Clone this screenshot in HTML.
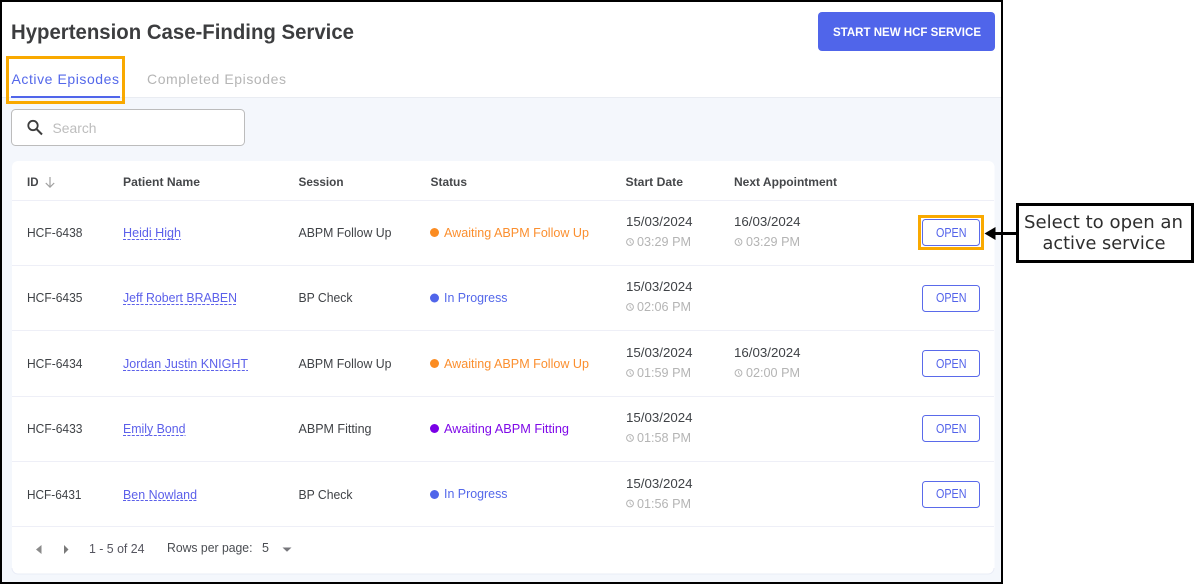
<!DOCTYPE html>
<html lang="en">
<head>
<meta charset="utf-8">
<title>Hypertension Case-Finding Service</title>
<style>
html,body{margin:0;padding:0;width:1196px;height:584px;overflow:hidden;background:#fff}
svg{display:block}
text{font-family:"Liberation Sans",Arial,sans-serif;font-size:12.5px;fill:#3f4246}
.h{font-weight:bold;font-size:12px;fill:#45474a}
.link{fill:#5c60ea}
.or{fill:#fb8f2f}
.bl{fill:#5468ea}
.pu{fill:#7f0ae8}
.t{fill:#b4b4b4}
.o{fill:#5262ea;font-size:12.5px}
.c{font-family:"DejaVu Sans",sans-serif;font-size:18px;fill:#2e2e2e}
</style>
</head>
<body>
<svg width="1196" height="584" viewBox="0 0 1196 584" xmlns="http://www.w3.org/2000/svg">
<rect width="1196" height="584" fill="#fff"/>
<rect x="2" y="98" width="999" height="484" fill="#f4f7fc"/>
<rect x="2" y="97" width="999" height="1" fill="#e9ecf2"/>

<text x="11" y="39" style="font-size:21px;font-weight:bold;fill:#3c3d3f" textLength="343" lengthAdjust="spacingAndGlyphs">Hypertension Case-Finding Service</text>

<rect x="818" y="12" width="177" height="39" rx="4" fill="#5065ea"/>
<text x="833" y="36" style="font-size:12px;font-weight:bold;fill:#fff" textLength="148" lengthAdjust="spacingAndGlyphs">START NEW HCF SERVICE</text>

<text x="11.5" y="84" style="font-size:14px;fill:#5468ea" textLength="107.5" lengthAdjust="spacing">Active Episodes</text>
<text x="147" y="84" style="font-size:14px;fill:#b5b5b5" textLength="139" lengthAdjust="spacing">Completed Episodes</text>
<rect x="11" y="96" width="109" height="2" fill="#5065ea"/>
<rect x="7.500" y="57.500" width="116" height="45" fill="none" stroke="#f9a900" stroke-width="3"/>

<rect x="11.500" y="109.500" width="233" height="36" rx="4" fill="#fff" stroke="#bcbcbc"/>
<circle cx="33" cy="125.500" r="4.700" fill="none" stroke="#3d3d3d" stroke-width="1.800"/>
<path d="M36.500 129l5.500 5.500" stroke="#3d3d3d" stroke-width="2" fill="none"/>
<text x="52.500" y="133" style="font-size:14px;fill:#bdbdbd" textLength="44" lengthAdjust="spacingAndGlyphs">Search</text>

<rect x="12" y="161" width="982.500" height="413" rx="6" fill="#fff"/>
<path d="M12 568a6 6 0 0 0 6 6h970a6 6 0 0 0 6-6" fill="none" stroke="#e9ecf6"/>
<g fill="#eeeff7">
<rect x="12" y="200" width="982" height="1"/>
<rect x="12" y="265" width="982" height="1"/>
<rect x="12" y="330" width="982" height="1"/>
<rect x="12" y="396" width="982" height="1"/>
<rect x="12" y="461" width="982" height="1"/>
<rect x="12" y="526" width="982" height="1"/>
</g>

<text class="h" x="27" y="186" textLength="11.500" lengthAdjust="spacingAndGlyphs">ID</text>
<path d="M50 177v10M45.800 183l4.200 4.200 4.200-4.200" fill="none" stroke="#a0a0a0" stroke-width="1.200"/>
<text class="h" x="123" y="186" textLength="77" lengthAdjust="spacingAndGlyphs">Patient Name</text>
<text class="h" x="298.500" y="186" textLength="45" lengthAdjust="spacingAndGlyphs">Session</text>
<text class="h" x="430.500" y="186" textLength="36.500" lengthAdjust="spacingAndGlyphs">Status</text>
<text class="h" x="625.500" y="186" textLength="57.500" lengthAdjust="spacingAndGlyphs">Start Date</text>
<text class="h" x="734" y="186" textLength="103" lengthAdjust="spacingAndGlyphs">Next Appointment</text>

<!-- Row 1 -->
<text x="27" y="237" textLength="55.500" lengthAdjust="spacingAndGlyphs">HCF-6438</text>
<text class="link" x="123" y="237" textLength="58" lengthAdjust="spacingAndGlyphs">Heidi High</text>
<path d="M123 239.500h58" stroke="#5c60ea" stroke-dasharray="3 1.400" fill="none"/>
<text x="298.500" y="237" textLength="93" lengthAdjust="spacingAndGlyphs">ABPM Follow Up</text>
<circle cx="434.500" cy="232.500" r="4.500" fill="#fb8c22"/>
<text class="or" x="444" y="237" textLength="145" lengthAdjust="spacingAndGlyphs">Awaiting ABPM Follow Up</text>
<text x="626" y="226" textLength="66.500" lengthAdjust="spacingAndGlyphs">15/03/2024</text>
<circle cx="630" cy="242" r="3.400" fill="none" stroke="#b4b4b4"/><path d="M630 240v2l1.500 1.500" fill="none" stroke="#b4b4b4" stroke-width=".8"/>
<text class="t" x="637" y="246" textLength="54" lengthAdjust="spacingAndGlyphs">03:29 PM</text>
<text x="734" y="226" textLength="66.500" lengthAdjust="spacingAndGlyphs">16/03/2024</text>
<circle cx="738.500" cy="242" r="3.400" fill="none" stroke="#b4b4b4"/><path d="M738.500 240v2l1.500 1.500" fill="none" stroke="#b4b4b4" stroke-width=".8"/>
<text class="t" x="746" y="246" textLength="54" lengthAdjust="spacingAndGlyphs">03:29 PM</text>
<rect x="922.500" y="219.500" width="57" height="26" rx="3" fill="#fff" stroke="#5a6aea"/>
<text class="o" x="936" y="237" textLength="30.500" lengthAdjust="spacingAndGlyphs">OPEN</text>
<rect x="919.500" y="216.500" width="63" height="32" fill="none" stroke="#f9a900" stroke-width="3"/>

<!-- Row 2 -->
<text x="27" y="302" textLength="55.500" lengthAdjust="spacingAndGlyphs">HCF-6435</text>
<text class="link" x="123" y="302" textLength="114" lengthAdjust="spacingAndGlyphs">Jeff Robert BRABEN</text>
<path d="M123 304.500h114" stroke="#5c60ea" stroke-dasharray="3 1.400" fill="none"/>
<text x="298.500" y="302" textLength="54" lengthAdjust="spacingAndGlyphs">BP Check</text>
<circle cx="434.500" cy="298" r="4.500" fill="#5065ea"/>
<text class="bl" x="444" y="302" textLength="63.500" lengthAdjust="spacingAndGlyphs">In Progress</text>
<text x="626" y="291" textLength="66.500" lengthAdjust="spacingAndGlyphs">15/03/2024</text>
<circle cx="630" cy="307" r="3.400" fill="none" stroke="#b4b4b4"/><path d="M630 305v2l1.500 1.500" fill="none" stroke="#b4b4b4" stroke-width=".8"/>
<text class="t" x="637" y="311" textLength="54" lengthAdjust="spacingAndGlyphs">02:06 PM</text>
<rect x="922.500" y="285.500" width="57" height="26" rx="3" fill="#fff" stroke="#5a6aea"/>
<text class="o" x="936" y="302" textLength="30.500" lengthAdjust="spacingAndGlyphs">OPEN</text>

<!-- Row 3 -->
<text x="27" y="368" textLength="55.500" lengthAdjust="spacingAndGlyphs">HCF-6434</text>
<text class="link" x="123" y="368" textLength="125" lengthAdjust="spacingAndGlyphs">Jordan Justin KNIGHT</text>
<path d="M123 370.500h125" stroke="#5c60ea" stroke-dasharray="3 1.400" fill="none"/>
<text x="298.500" y="368" textLength="93" lengthAdjust="spacingAndGlyphs">ABPM Follow Up</text>
<circle cx="434.500" cy="363.500" r="4.500" fill="#fb8c22"/>
<text class="or" x="444" y="368" textLength="145" lengthAdjust="spacingAndGlyphs">Awaiting ABPM Follow Up</text>
<text x="626" y="357" textLength="66.500" lengthAdjust="spacingAndGlyphs">15/03/2024</text>
<circle cx="630" cy="373" r="3.400" fill="none" stroke="#b4b4b4"/><path d="M630 371v2l1.500 1.500" fill="none" stroke="#b4b4b4" stroke-width=".8"/>
<text class="t" x="637" y="377" textLength="54" lengthAdjust="spacingAndGlyphs">01:59 PM</text>
<text x="734" y="357" textLength="66.500" lengthAdjust="spacingAndGlyphs">16/03/2024</text>
<circle cx="738.500" cy="373" r="3.400" fill="none" stroke="#b4b4b4"/><path d="M738.500 371v2l1.500 1.500" fill="none" stroke="#b4b4b4" stroke-width=".8"/>
<text class="t" x="746" y="377" textLength="54" lengthAdjust="spacingAndGlyphs">02:00 PM</text>
<rect x="922.500" y="350.500" width="57" height="26" rx="3" fill="#fff" stroke="#5a6aea"/>
<text class="o" x="936" y="368" textLength="30.500" lengthAdjust="spacingAndGlyphs">OPEN</text>

<!-- Row 4 -->
<text x="27" y="433" textLength="55.500" lengthAdjust="spacingAndGlyphs">HCF-6433</text>
<text class="link" x="123" y="433" textLength="62.500" lengthAdjust="spacingAndGlyphs">Emily Bond</text>
<path d="M123 435.500h62.500" stroke="#5c60ea" stroke-dasharray="3 1.400" fill="none"/>
<text x="298.500" y="433" textLength="73" lengthAdjust="spacingAndGlyphs">ABPM Fitting</text>
<circle cx="434.500" cy="428.500" r="4.500" fill="#7a00e6"/>
<text class="pu" x="444" y="433" textLength="125" lengthAdjust="spacingAndGlyphs">Awaiting ABPM Fitting</text>
<text x="626" y="422" textLength="66.500" lengthAdjust="spacingAndGlyphs">15/03/2024</text>
<circle cx="630" cy="438" r="3.400" fill="none" stroke="#b4b4b4"/><path d="M630 436v2l1.500 1.500" fill="none" stroke="#b4b4b4" stroke-width=".8"/>
<text class="t" x="637" y="442" textLength="54" lengthAdjust="spacingAndGlyphs">01:58 PM</text>
<rect x="922.500" y="415.500" width="57" height="26" rx="3" fill="#fff" stroke="#5a6aea"/>
<text class="o" x="936" y="433" textLength="30.500" lengthAdjust="spacingAndGlyphs">OPEN</text>

<!-- Row 5 -->
<text x="27" y="499" textLength="54.500" lengthAdjust="spacingAndGlyphs">HCF-6431</text>
<text class="link" x="123" y="499" textLength="74" lengthAdjust="spacingAndGlyphs">Ben Nowland</text>
<path d="M123 500.500h74" stroke="#5c60ea" stroke-dasharray="3 1.400" fill="none"/>
<text x="298.500" y="499" textLength="54" lengthAdjust="spacingAndGlyphs">BP Check</text>
<circle cx="434.500" cy="494.500" r="4.500" fill="#5065ea"/>
<text class="bl" x="444" y="498" textLength="63.500" lengthAdjust="spacingAndGlyphs">In Progress</text>
<text x="626" y="488" textLength="66.500" lengthAdjust="spacingAndGlyphs">15/03/2024</text>
<circle cx="630" cy="503.500" r="3.400" fill="none" stroke="#b4b4b4"/><path d="M630 501.500v2l1.500 1.500" fill="none" stroke="#b4b4b4" stroke-width=".8"/>
<text class="t" x="637" y="508" textLength="54" lengthAdjust="spacingAndGlyphs">01:56 PM</text>
<rect x="922.500" y="481.500" width="57" height="26" rx="3" fill="#fff" stroke="#5a6aea"/>
<text class="o" x="936" y="498" textLength="30.500" lengthAdjust="spacingAndGlyphs">OPEN</text>

<!-- Pagination -->
<path d="M41.500 545v9l-5.500-4.500z" fill="#8a8a8a"/>
<path d="M64 545v9l4.500-4.500z" fill="#7a7a7a"/>
<text x="89" y="553" style="font-size:12.500px;fill:#55555f" textLength="55.500" lengthAdjust="spacingAndGlyphs">1 - 5 of 24</text>
<text x="167" y="552" style="font-size:12.500px;fill:#4a4d52" textLength="85.500" lengthAdjust="spacingAndGlyphs">Rows per page:</text>
<text x="262" y="552" style="font-size:12.500px;fill:#4a4d52">5</text>
<path d="M282.500 547.500h9l-4.500 4.300z" fill="#77777c"/>

<!-- Outer frame -->
<rect x="1" y="1" width="1001" height="582" fill="none" stroke="#000" stroke-width="2"/>

<!-- Callout -->
<path d="M1017 233.500h-25" stroke="#000" stroke-width="3" fill="none"/>
<path d="M984.500 233.500l11-6.500v13z" fill="#000"/>
<rect x="1017.500" y="204.500" width="175" height="57" fill="#fff" stroke="#000" stroke-width="3"/>
<text class="c" x="1024" y="228" textLength="159" lengthAdjust="spacingAndGlyphs">Select to open an</text>
<text class="c" x="1042.500" y="249" textLength="123" lengthAdjust="spacingAndGlyphs">active service</text>
</svg>
</body>
</html>
